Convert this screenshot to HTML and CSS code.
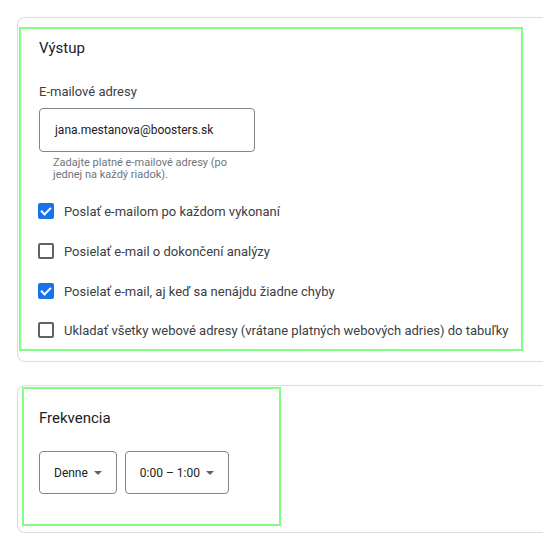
FILE: index.html
```html
<!DOCTYPE html>
<html lang="sk">

<head>
  <meta charset="UTF-8" />
  <meta name="viewport" content="width=device-width, initial-scale=1.0" />
  <title>Nastavenia</title>
  <link rel="stylesheet" href="styles.css">
</head>

<body>
  <div class="page">
    <div class="card card-output">
      <section class="section section-output">
        <h2 class="section-title">Výstup</h2>

        <label class="field-label" for="emails">E-mailové adresy</label>
        <div class="text-field" id="emails">jana.mestanova@boosters.sk</div>
        <p class="helper">Zadajte platné e-mailové adresy (po jednej na každý riadok).</p>

        <div class="checks">
          <label class="check-row">
            <span class="box checked"></span>
            <span>Poslať e-mailom po každom vykonaní</span>
          </label>
          <label class="check-row">
            <span class="box"></span>
            <span>Posielať e-mail o dokončení analýzy</span>
          </label>
          <label class="check-row">
            <span class="box checked"></span>
            <span>Posielať e-mail, aj keď sa nenájdu žiadne chyby</span>
          </label>
          <label class="check-row">
            <span class="box"></span>
            <span>Ukladať všetky webové adresy (vrátane platných webových adries) do tabuľky</span>
          </label>
        </div>
      </section>
    </div>

    <div class="card card-frequency">
      <section class="section section-frequency">
        <h2 class="section-title">Frekvencia</h2>
        <div class="selects">
          <div class="select">Denne <span class="arrow"></span></div>
          <div class="select">0:00 – 1:00 <span class="arrow"></span></div>
        </div>
      </section>
    </div>
  </div>
</body>

</html>
```

FILE: styles.css
```css
body {
  margin: 0;
  padding: 0;
  font-family: Roboto, 'Liberation Sans', sans-serif;
  color: #3c4043;
  overflow: hidden;
  background: #fff;
}

.page {
  padding: 17px 0 0 17px;
}

/* cards continue past the right edge, so no right border */
.card {
  border: 1px solid #dadce0;
  border-right: none;
  border-radius: 8px 0 0 8px;
}

.card-output {
  padding: 9px 0 10px 1px;
}

.card-frequency {
  margin-top: 23px;
  padding: 1px 0 6px 4px;
}

.section {
  border: 2px solid #80ff80;
  box-sizing: border-box;
}

.section-output {
  width: 504px;
  padding: 9px 0 0 18px;
}

.section-frequency {
  width: 259px;
  padding: 19px 0 30px 15px;
}

.section-title {
  margin: 0;
  font-size: 15px;
  line-height: 20px;
  font-weight: 400;
  color: #202124;
}

.field-label {
  display: block;
  margin-top: 24px;
  font-size: 13px;
  line-height: 20px;
}

.text-field {
  margin-top: 6px;
  width: 216px;
  height: 44px;
  box-sizing: border-box;
  border: 1px solid #80868b;
  border-radius: 4px;
  padding: 0 15px;
  display: flex;
  align-items: center;
  font-size: 12px;
  color: #202124;
}

.helper {
  margin: 5px 0 0 14px;
  width: 185px;
  font-size: 11px;
  line-height: 12px;
  color: #70757a;
}

.checks {
  margin-top: 10px;
}

.check-row {
  display: flex;
  align-items: center;
  gap: 10px;
  height: 40px;
  margin-left: -1px;
  font-size: 13px;
}

.check-row:last-child {
  height: 38px;
}

.box {
  width: 16px;
  height: 16px;
  box-sizing: border-box;
  border: 2px solid #5f6368;
  border-radius: 2px;
  position: relative;
  flex: none;
}

.box.checked {
  background-color: #1a73e8;
  border-color: #1a73e8;
}

.box.checked::after {
  content: '';
  position: absolute;
  left: 3px;
  top: 0px;
  width: 4px;
  height: 8px;
  border: solid #fff;
  border-width: 0 2px 2px 0;
  transform: rotate(45deg);
}

.selects {
  display: flex;
  gap: 8px;
  margin-top: 23px;
}

.select {
  display: flex;
  align-items: center;
  gap: 6px;
  height: 43px;
  box-sizing: border-box;
  padding: 0 14px;
  border: 1px solid #80868b;
  border-radius: 4px;
  font-size: 12px;
  color: #202124;
}

.arrow {
  width: 0;
  height: 0;
  border-left: 4px solid transparent;
  border-right: 4px solid transparent;
  border-top: 4px solid #5f6368;
}
```
